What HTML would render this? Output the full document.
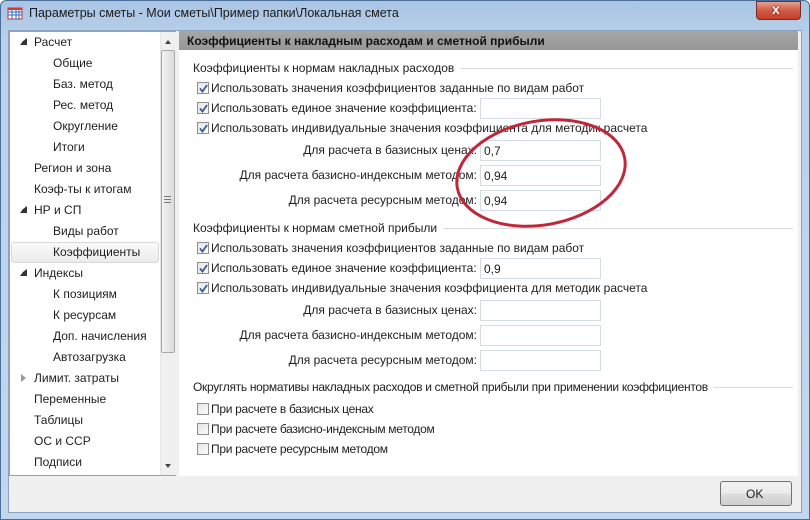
<!DOCTYPE html>
<html><head><meta charset="utf-8">
<style>
*{margin:0;padding:0;box-sizing:border-box}
body{width:810px;height:520px;overflow:hidden;background:#fff;font-family:"Liberation Sans","DejaVu Sans",sans-serif;font-size:12px;color:#1e1e1e;position:relative}
.a{position:absolute;white-space:nowrap}
#frame{position:absolute;left:0;top:0;width:810px;height:520px;background:linear-gradient(#a9c4e4,#b9d1ea 40px,#c2d7ee);border:1px solid #4a6e97;border-radius:6px 6px 0 0}
.t{position:absolute;font-size:12px;line-height:14px}
.ti{background:#fff;padding-right:6px;z-index:2}
.cb{position:absolute;width:12px;height:12px;border:1px solid #8f8f8f;background:linear-gradient(135deg,#e6e6e6,#fafafa)}
.cb svg{position:absolute;left:0;top:0}
.in{position:absolute;left:480px;width:121px;height:21px;border:1px solid #d5dbe2;background:#fff;padding:3px 3px;font-size:12px;line-height:14px}
.sep{position:absolute;height:1px;background:#dcdcdc}
.tree{font-size:12.5px}
</style></head><body>
<div id="frame"></div>
<svg class="a" style="left:7px;top:6px" width="16" height="14"><rect x="1" y="2" width="14" height="11" fill="#fff" stroke="#c33" stroke-width="1"/><path d="M1 6h14M1 9h14M5 2v11M9 2v11M12 2v11" stroke="#2d6bc4" stroke-width="1"/><rect x="1" y="2" width="14" height="2" fill="#d33"/></svg>
<div class="a" style="left:29px;top:6px;font-size:12.5px;color:#1a1a1a">Параметры сметы - Мои сметы\Пример папки\Локальная смета</div>
<div class="a" style="left:756px;top:1px;width:45px;height:19px;border:1px solid #7a2a22;border-radius:0 0 4px 4px;background:linear-gradient(#e7a192,#cf5a44 50%,#c3402a)"></div>
<div class="a" style="left:772px;top:1px;color:#fff;font-weight:bold;font-size:14px;text-shadow:0 0 2px #600">x</div>
<div class="a" style="left:8px;top:30px;width:794px;height:483px;background:#f0f0f0;border:1px solid #8ba3c1"></div>
<div class="a" style="left:9px;top:31px;width:167px;height:445px;background:#fff;border:1px solid #a0a0a0"></div>
<div class="a" style="left:160px;top:32px;width:16px;height:443px;background:#f0f0f0;border-left:1px solid #e6e6e6"></div>
<div class="a" style="left:161px;top:50px;width:14px;height:303px;border:1px solid #a8a8a8;border-radius:2px;background:linear-gradient(90deg,#f2f2f2,#dcdcdc)"></div>
<div class="a" style="left:164px;top:196px;width:7px;height:7px;border-top:1px solid #777;border-bottom:1px solid #777"></div>
<div class="a" style="left:164px;top:199px;width:7px;height:1px;background:#777"></div>
<div class="a" style="left:165px;top:37px;width:0;height:0;border:3px solid transparent;border-bottom:4px solid #444"></div>
<div class="a" style="left:165px;top:464px;width:0;height:0;border:3px solid transparent;border-top:4px solid #444"></div>
<div class="a" style="left:11px;top:242px;width:148px;height:21px;border:1px solid #d9d9d9;border-radius:3px;background:linear-gradient(#fafafa,#ebebeb)"></div>
<div class="tree">
<div class="a" style="left:20px;top:38px;border:3px solid transparent;border-right:4px solid #333;border-bottom:4px solid #333;width:0;height:0"></div>
<div class="t a" style="left:34px;top:35px">Расчет</div>
<div class="t a" style="left:53px;top:56px">Общие</div>
<div class="t a" style="left:53px;top:77px">Баз. метод</div>
<div class="t a" style="left:53px;top:98px">Рес. метод</div>
<div class="t a" style="left:53px;top:119px">Округление</div>
<div class="t a" style="left:53px;top:140px">Итоги</div>
<div class="t a" style="left:34px;top:161px">Регион и зона</div>
<div class="t a" style="left:34px;top:182px">Коэф-ты к итогам</div>
<div class="a" style="left:20px;top:206px;border:3px solid transparent;border-right:4px solid #333;border-bottom:4px solid #333;width:0;height:0"></div>
<div class="t a" style="left:34px;top:203px">НР и СП</div>
<div class="t a" style="left:53px;top:224px">Виды работ</div>
<div class="t a" style="left:53px;top:245px">Коэффициенты</div>
<div class="a" style="left:20px;top:269px;border:3px solid transparent;border-right:4px solid #333;border-bottom:4px solid #333;width:0;height:0"></div>
<div class="t a" style="left:34px;top:266px">Индексы</div>
<div class="t a" style="left:53px;top:287px">К позициям</div>
<div class="t a" style="left:53px;top:308px">К ресурсам</div>
<div class="t a" style="left:53px;top:329px">Доп. начисления</div>
<div class="t a" style="left:53px;top:350px">Автозагрузка</div>
<div class="a" style="left:21px;top:374px;border:4px solid transparent;border-left:5px solid #999;width:0;height:0"></div>
<div class="t a" style="left:34px;top:371px">Лимит. затраты</div>
<div class="t a" style="left:34px;top:392px">Переменные</div>
<div class="t a" style="left:34px;top:413px">Таблицы</div>
<div class="t a" style="left:34px;top:434px">ОС и ССР</div>
<div class="t a" style="left:34px;top:455px">Подписи</div>
</div>
<div class="a" style="left:179px;top:31px;width:619px;height:445px;background:#fff"></div>
<div class="a" style="left:179px;top:31px;width:619px;height:19px;background:linear-gradient(#a7a7a7,#979797)"></div>
<div class="t a" style="left:187px;top:34px;font-weight:bold;color:#111">Коэффициенты к накладным расходам и сметной прибыли</div>

<div class="sep" style="left:436px;top:68px;width:357px"></div>
<div class="t a ti" style="left:193px;top:61px">Коэффициенты к нормам накладных расходов</div>
<div class="t a" style="left:211px;top:81px">Использовать значения коэффициентов заданные по видам работ</div>
<div class="t a" style="left:211px;top:101px">Использовать единое значение коэффициента:</div>
<div class="t a" style="left:211px;top:121px">Использовать индивидуальные значения коэффициента для методик расчета</div>
<div class="t a" style="right:333px;top:143px">Для расчета в базисных ценах:</div>
<div class="t a" style="right:333px;top:168px">Для расчета базисно-индексным методом:</div>
<div class="t a" style="right:333px;top:193px">Для расчета ресурсным методом:</div>
<div class="in" style="top:98px"></div>
<div class="in" style="top:140px">0,7</div>
<div class="in" style="top:165px">0,94</div>
<div class="in" style="top:190px">0,94</div>

<div class="sep" style="left:416px;top:228px;width:377px"></div>
<div class="t a ti" style="left:193px;top:221px">Коэффициенты к нормам сметной прибыли</div>
<div class="t a" style="left:211px;top:241px">Использовать значения коэффициентов заданные по видам работ</div>
<div class="t a" style="left:211px;top:261px">Использовать единое значение коэффициента:</div>
<div class="t a" style="left:211px;top:281px">Использовать индивидуальные значения коэффициента для методик расчета</div>
<div class="t a" style="right:333px;top:303px">Для расчета в базисных ценах:</div>
<div class="t a" style="right:333px;top:328px">Для расчета базисно-индексным методом:</div>
<div class="t a" style="right:333px;top:353px">Для расчета ресурсным методом:</div>
<div class="in" style="top:258px">0,9</div>
<div class="in" style="top:300px"></div>
<div class="in" style="top:325px"></div>
<div class="in" style="top:350px"></div>

<div class="sep" style="left:690px;top:387px;width:103px"></div>
<div class="t a ti" style="left:193px;top:380px;letter-spacing:-0.3px">Округлять нормативы накладных расходов и сметной прибыли при применении коэффициентов</div>
<div class="t a" style="left:211px;top:402px;letter-spacing:-0.3px">При расчете в базисных ценах</div>
<div class="t a" style="left:211px;top:422px;letter-spacing:-0.3px">При расчете базисно-индексным методом</div>
<div class="t a" style="left:211px;top:442px;letter-spacing:-0.3px">При расчете ресурсным методом</div>

<div class="cb" style="left:197px;top:82px"><svg width="11" height="11"><path d="M2 5.5l2.5 3L9 2" stroke="#3c5a9a" stroke-width="1.8" fill="none"/></svg></div>
<div class="cb" style="left:197px;top:102px"><svg width="11" height="11"><path d="M2 5.5l2.5 3L9 2" stroke="#3c5a9a" stroke-width="1.8" fill="none"/></svg></div>
<div class="cb" style="left:197px;top:122px"><svg width="11" height="11"><path d="M2 5.5l2.5 3L9 2" stroke="#3c5a9a" stroke-width="1.8" fill="none"/></svg></div>
<div class="cb" style="left:197px;top:242px"><svg width="11" height="11"><path d="M2 5.5l2.5 3L9 2" stroke="#3c5a9a" stroke-width="1.8" fill="none"/></svg></div>
<div class="cb" style="left:197px;top:262px"><svg width="11" height="11"><path d="M2 5.5l2.5 3L9 2" stroke="#3c5a9a" stroke-width="1.8" fill="none"/></svg></div>
<div class="cb" style="left:197px;top:282px"><svg width="11" height="11"><path d="M2 5.5l2.5 3L9 2" stroke="#3c5a9a" stroke-width="1.8" fill="none"/></svg></div>
<div class="cb" style="left:197px;top:403px"></div>
<div class="cb" style="left:197px;top:423px"></div>
<div class="cb" style="left:197px;top:443px"></div>

<svg class="a" style="left:0;top:0;z-index:5" width="810" height="520"><ellipse cx="541" cy="173" rx="85" ry="52" transform="rotate(-10 541 173)" fill="none" stroke="#c1273a" stroke-width="3"/></svg>

<div class="a" style="left:720px;top:481px;width:72px;height:25px;border:1px solid #707070;border-radius:3px;background:linear-gradient(#f2f2f2,#ebebeb 50%,#dddddd 51%,#cfcfcf)"></div>
<div class="t a" style="left:746px;top:487px">OK</div>
</body></html>
